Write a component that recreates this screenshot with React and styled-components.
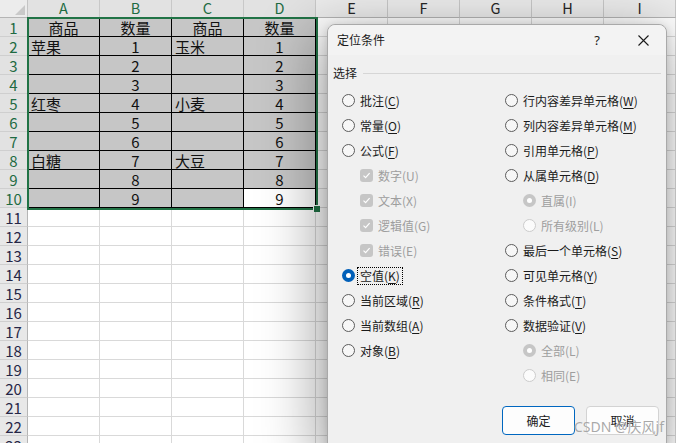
import React from "react";
import styled, { createGlobalStyle, css } from "styled-components";

const GlobalStyle = createGlobalStyle`
  html, body { margin: 0; padding: 0; background: #fff; overflow: hidden; }
  body { font-family: "Noto Sans CJK SC", "Noto Sans", sans-serif; }
  #root { width: 676px; height: 443px; }
`;

const Page = styled.div`
  position: relative;
  width: 676px;
  height: 443px;
  overflow: hidden;
  background: #fff;
`;

const Sheet = styled.div`
  position: relative;
  display: grid;
  grid-template-columns: 28px repeat(9, 72px);
  grid-template-rows: 18px repeat(23, 19px);
  font-family: "Noto Sans CJK SC", "Noto Sans", sans-serif;
  font-size: 15px;
  color: #111;
`;

const Corner = styled.div`
  box-sizing: border-box;
  background: #ececec;
  border-right: 1px solid #c4c4c4;
  border-bottom: 1px solid #b5b5b5;
  display: flex;
  align-items: flex-end;
  justify-content: flex-end;
  padding: 0 2px 2px 0;
  &::after {
    content: "";
    width: 0;
    height: 0;
    border-left: 10px solid transparent;
    border-bottom: 10px solid #c9c9c9;
  }
`;

const ColHead = styled.div`
  box-sizing: border-box;
  background: ${(p) => (p.$sel ? "#e2e2e2" : "#ececec")};
  border-right: 1px solid #c8c8c8;
  border-bottom: 1px solid #b5b5b5;
  display: flex;
  align-items: center;
  justify-content: center;
  line-height: 1;
  font-size: 14.5px;
  color: ${(p) => (p.$sel ? "#1e6b42" : "#262626")};
`;

const RowHead = styled.div`
  box-sizing: border-box;
  background: ${(p) => (p.$sel ? "#e2e2e2" : "#e8e8e8")};
  border-right: 1px solid #b5b5b5;
  border-bottom: 1px solid #cfcfcf;
  display: flex;
  align-items: center;
  justify-content: center;
  line-height: 1;
  color: ${(p) => (p.$sel ? "#1e6b42" : "#262646")};
`;

const Cell = styled.div`
  box-sizing: border-box;
  display: flex;
  align-items: center;
  justify-content: ${(p) => (p.$align === "left" ? "flex-start" : "center")};
  padding-left: ${(p) => (p.$align === "left" ? "3px" : "0")};
  line-height: 1;
  white-space: nowrap;
  overflow: hidden;
  border-right: 1px solid #d9d9d9;
  border-bottom: 1px solid #d9d9d9;
  background: #fff;
  ${(p) =>
    p.$table &&
    css`
      border-right-color: #000;
      border-bottom-color: #000;
      background: ${p.$white ? "#fff" : "#c6c6c6"};
    `}
`;

const Selection = styled.div`
  position: absolute;
  left: 27px;
  top: 17px;
  width: 291px;
  height: 193px;
  box-sizing: border-box;
  border: 2px solid #217346;
  pointer-events: none;
`;

const FillHandle = styled.div`
  position: absolute;
  right: -4px;
  bottom: -4px;
  width: 6px;
  height: 6px;
  background: #217346;
  border-left: 1px solid #fff;
  border-top: 1px solid #fff;
`;

/* ---------- dialog ---------- */

const Dialog = styled.div`
  position: absolute;
  left: 327px;
  top: 24px;
  width: 340px;
  height: 424px;
  box-sizing: border-box;
  background: #f0f0f0;
  border: 1px solid #a9a9a9;
  border-radius: 8px 8px 0 0;
  box-shadow: -6px 14px 56px 6px rgba(0, 0, 0, 0.34), 0 2px 8px rgba(0, 0, 0, 0.14);
  display: flex;
  flex-direction: column;
  font-family: "Noto Sans CJK SC", "Noto Sans", sans-serif;
  font-size: 12px;
  color: #1b1b1b;
`;

const TitleBar = styled.div`
  height: 30px;
  flex: none;
  display: flex;
  align-items: center;
  background: #f3f3f3;
  border-radius: 8px 8px 0 0;
  padding-left: 9px;
`;

const Title = styled.div`
  flex: 1;
  font-size: 12px;
  line-height: 1;
  color: #1a1a1a;
  padding-bottom: 1px;
`;

const TitleButton = styled.div`
  width: 46px;
  height: 30px;
  display: flex;
  align-items: center;
  justify-content: center;
  font-family: "Noto Sans", sans-serif;
  font-size: 13px;
  color: #1a1a1a;
`;

const Body = styled.div`
  flex: 1;
  display: flex;
  flex-direction: column;
  padding: 10px 7px 0 5px;
`;

const Legend = styled.div`
  display: flex;
  align-items: center;
  gap: 6px;
  height: 16px;
  line-height: 1;
  &::after {
    content: "";
    flex: 1;
    height: 1px;
    background: #d6d6d6;
    margin-right: -2px;
  }
`;

const Options = styled.div`
  display: grid;
  grid-template-columns: 163px 1fr;
  padding-left: 9px;
  margin-top: 7px;
`;

const Column = styled.div`
  display: flex;
  flex-direction: column;
`;

const OptionRow = styled.div`
  height: 25px;
  display: flex;
  align-items: center;
  padding-left: ${(p) => (p.$indent ? "18px" : "0")};
`;

const RadioDot = styled.span`
  width: 13px;
  height: 13px;
  box-sizing: border-box;
  border-radius: 50%;
  flex: none;
  display: flex;
  align-items: center;
  justify-content: center;
  border: 1px solid #5c5c5c;
  background: #f7f7f7;
  ${(p) =>
    p.$checked &&
    css`
      border: none;
      background: ${p.$disabled ? "#c6c6c6" : "#005fb8"};
      &::after {
        content: "";
        width: 5px;
        height: 5px;
        border-radius: 50%;
        background: #fff;
      }
    `}
  ${(p) =>
    !p.$checked &&
    p.$disabled &&
    css`
      border-color: #cccccc;
      background: #fbfbfb;
    `}
`;

const CheckBox = styled.span`
  width: 13px;
  height: 13px;
  box-sizing: border-box;
  border-radius: 3px;
  flex: none;
  display: flex;
  align-items: center;
  justify-content: center;
  background: #c6c6c6;
`;

const OptionLabel = styled.span`
  margin-left: 2px;
  padding: 1px 2px;
  height: 18px;
  box-sizing: border-box;
  display: flex;
  align-items: center;
  line-height: 1;
  white-space: nowrap;
  border: 1px dotted ${(p) => (p.$focus ? "#000" : "transparent")};
  color: ${(p) => (p.$disabled ? "#9e9e9e" : "#1b1b1b")};
  u {
    text-decoration: underline;
    text-underline-offset: 2px;
  }
`;

const Buttons = styled.div`
  margin-top: auto;
  margin-bottom: 12px;
  display: flex;
  justify-content: flex-end;
  gap: 11px;
`;

const Button = styled.div`
  width: 73px;
  height: 29px;
  box-sizing: border-box;
  border-radius: 4px;
  background: #fdfdfd;
  display: flex;
  align-items: center;
  justify-content: center;
  font-size: 12px;
  line-height: 1;
  color: #1b1b1b;
  border: 1px solid ${(p) => (p.$primary ? "#0067c0" : "#d3d3d3")};
`;

const Watermark = styled.div`
  position: absolute;
  left: 574px;
  top: 418px;
  font-family: "Noto Sans", "Noto Sans CJK SC", sans-serif;
  font-size: 14px;
  line-height: 18px;
  color: rgba(140, 140, 140, 0.75);
  text-shadow: 0 0 1px rgba(255, 255, 255, 0.9);
  white-space: nowrap;
  pointer-events: none;
`;

const cols = ["A", "B", "C", "D", "E", "F", "G", "H", "I"];

const data = [
  ["商品", "数量", "商品", "数量"],
  ["苹果", "1", "玉米", "1"],
  ["", "2", "", "2"],
  ["", "3", "", "3"],
  ["红枣", "4", "小麦", "4"],
  ["", "5", "", "5"],
  ["", "6", "", "6"],
  ["白糖", "7", "大豆", "7"],
  ["", "8", "", "8"],
  ["", "9", "", "9"],
];

const leftOptions = [
  { t: "批注", k: "C" },
  { t: "常量", k: "O" },
  { t: "公式", k: "F" },
  { t: "数字", k: "U", check: true, indent: true, disabled: true },
  { t: "文本", k: "X", check: true, indent: true, disabled: true },
  { t: "逻辑值", k: "G", check: true, indent: true, disabled: true },
  { t: "错误", k: "E", check: true, indent: true, disabled: true },
  { t: "空值", k: "K", checked: true, focus: true },
  { t: "当前区域", k: "R" },
  { t: "当前数组", k: "A" },
  { t: "对象", k: "B" },
];

const rightOptions = [
  { t: "行内容差异单元格", k: "W" },
  { t: "列内容差异单元格", k: "M" },
  { t: "引用单元格", k: "P" },
  { t: "从属单元格", k: "D" },
  { t: "直属", k: "I", indent: true, disabled: true, checked: true },
  { t: "所有级别", k: "L", indent: true, disabled: true },
  { t: "最后一个单元格", k: "S" },
  { t: "可见单元格", k: "Y" },
  { t: "条件格式", k: "T" },
  { t: "数据验证", k: "V" },
  { t: "全部", k: "L", indent: true, disabled: true, checked: true },
  { t: "相同", k: "E", indent: true, disabled: true },
];

function Option({ o }) {
  return (
    <OptionRow $indent={o.indent}>
      {o.check ? (
        <CheckBox>
          <svg width="9" height="9" viewBox="0 0 9 9">
            <path d="M1.5 4.6 L3.6 6.6 L7.6 2.2" fill="none" stroke="#fff" strokeWidth="1.2" />
          </svg>
        </CheckBox>
      ) : (
        <RadioDot $checked={o.checked} $disabled={o.disabled} />
      )}
      <OptionLabel $disabled={o.disabled} $focus={o.focus}>
        {o.t}(
        {o.disabled ? o.k : <u>{o.k}</u>})
      </OptionLabel>
    </OptionRow>
  );
}

export default function App() {
  const rows = [];
  for (let r = 1; r <= 23; r++) {
    const sel = r <= 10;
    rows.push(
      <RowHead key={`rh${r}`} $sel={sel}>
        {r}
      </RowHead>
    );
    cols.forEach((c, ci) => {
      const inTable = r <= 10 && ci < 4;
      const val = inTable ? data[r - 1][ci] : "";
      const align = inTable && r > 1 && (ci === 0 || ci === 2) ? "left" : "center";
      rows.push(
        <Cell key={`${c}${r}`} $table={inTable} $white={r === 10 && ci === 3} $align={align}>
          {val}
        </Cell>
      );
    });
  }

  return (
    <Page>
      <GlobalStyle />
      <Sheet>
        <Corner />
        {cols.map((c, i) => (
          <ColHead key={c} $sel={i < 4}>
            {c}
          </ColHead>
        ))}
        {rows}
        <Selection>
          <FillHandle />
        </Selection>
      </Sheet>

      <Dialog>
        <TitleBar>
          <Title>定位条件</Title>
          <TitleButton>?</TitleButton>
          <TitleButton>
            <svg width="11" height="11" viewBox="0 0 11 11">
              <path d="M0.5 0.5 L10.5 10.5 M10.5 0.5 L0.5 10.5" stroke="#1a1a1a" strokeWidth="1.1" />
            </svg>
          </TitleButton>
        </TitleBar>
        <Body>
          <Legend>选择</Legend>
          <Options>
            <Column>
              {leftOptions.map((o, i) => (
                <Option key={i} o={o} />
              ))}
            </Column>
            <Column>
              {rightOptions.map((o, i) => (
                <Option key={i} o={o} />
              ))}
            </Column>
          </Options>
          <Buttons>
            <Button $primary>确定</Button>
            <Button>取消</Button>
          </Buttons>
        </Body>
      </Dialog>
      <Watermark>CSDN @庆风jf</Watermark>
    </Page>
  );
}
